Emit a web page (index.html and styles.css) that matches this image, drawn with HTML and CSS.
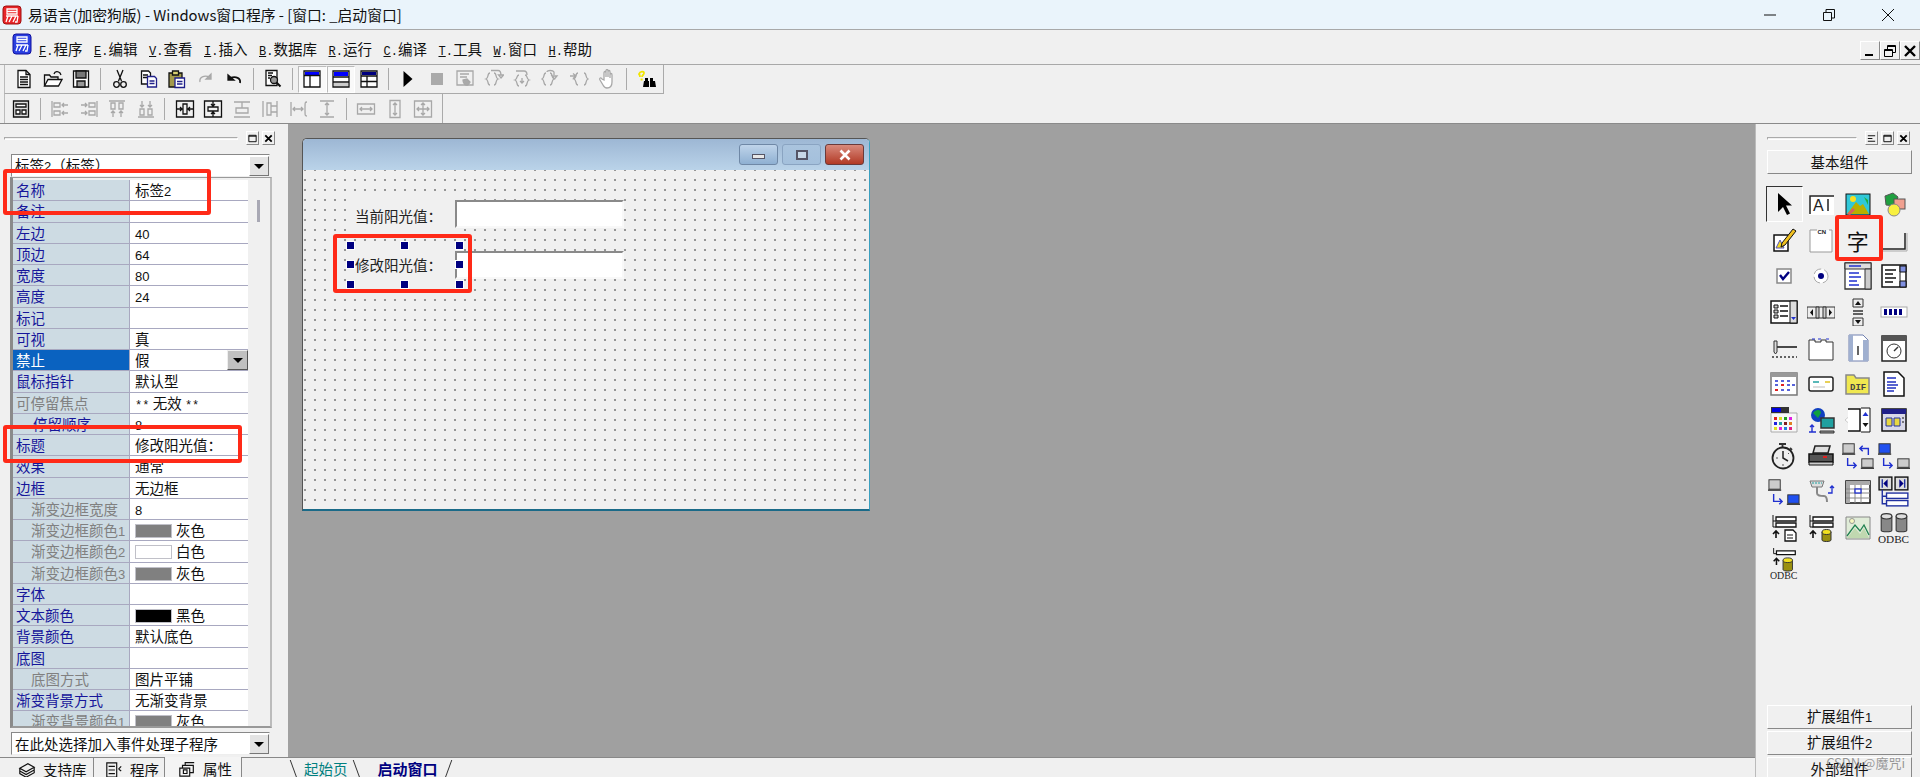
FILE: index.html
```html
<!DOCTYPE html>
<html lang="zh">
<head>
  <meta charset="UTF-8">
  <title>易语言(加密狗版) - Windows窗口程序</title>
  <link rel="stylesheet" href="styles.css">
</head>
<body>
  <!-- 标题栏 -->
  <header class="titlebar">
    <svg class="app-logo" viewBox="0 0 20 20"><rect x="1" y="1" width="18" height="18" rx="3" fill="#e8262a" stroke="#a01010"/><path d="M5 4h10v5H5zM5 6.5h10M4 11h12M6 11l-2 6M10 11l-3 6M14 11l-3 6M16 11l-1 6h-2" fill="none" stroke="#fff" stroke-width="1.3"/></svg>
    <span class="title-text">易语言(加密狗版) - Windows窗口程序 - [窗口: _启动窗口]</span>
    <div class="win-controls">
      <svg viewBox="0 0 14 14"><path d="M1 7h12" stroke="#111" fill="none"/></svg>
      <svg viewBox="0 0 14 14"><path d="M1.5 4.5h8v8h-8zM4 4V1.5h8.5V10H10" stroke="#111" fill="none"/></svg>
      <svg viewBox="0 0 14 14"><path d="M1 1l12 12M13 1L1 13" stroke="#111" fill="none"/></svg>
    </div>
  </header>

  <!-- 菜单 -->
  <nav class="menubar">
    <svg class="menu-logo" viewBox="0 0 20 22"><rect x="1" y="1" width="18" height="20" rx="3" fill="#2a3fe0" stroke="#1010a0"/><path d="M5 4h10v5H5zM5 6.5h10M4 12h12M6 12l-2 6M10 12l-3 6M14 12l-3 6M16 12l-1 6h-2" fill="none" stroke="#fff" stroke-width="1.3"/></svg>
    <a class="menu-item"><span class="m"><u>F</u>.</span>程序</a>
    <a class="menu-item"><span class="m"><u>E</u>.</span>编辑</a>
    <a class="menu-item"><span class="m"><u>V</u>.</span>查看</a>
    <a class="menu-item"><span class="m"><u>I</u>.</span>插入</a>
    <a class="menu-item"><span class="m"><u>B</u>.</span>数据库</a>
    <a class="menu-item"><span class="m"><u>R</u>.</span>运行</a>
    <a class="menu-item"><span class="m"><u>C</u>.</span>编译</a>
    <a class="menu-item"><span class="m"><u>T</u>.</span>工具</a>
    <a class="menu-item"><span class="m"><u>W</u>.</span>窗口</a>
    <a class="menu-item"><span class="m"><u>H</u>.</span>帮助</a>
    <div class="mdi-controls">
      <button class="mdi-btn"><svg viewBox="0 0 14 14"><path d="M2 11h8" stroke="#000" stroke-width="2"/></svg></button>
      <button class="mdi-btn"><svg viewBox="0 0 14 14"><path d="M1.5 5.5h8v7h-8zM1.5 6.5h8M4.5 5V1.5h8v7H10M4.5 2.5h8" stroke="#000" fill="none"/></svg></button>
      <button class="mdi-btn"><svg viewBox="0 0 14 14"><path d="M2 2l10 10M12 2L2 12" stroke="#000" stroke-width="2.4"/></svg></button>
    </div>
  </nav>

  <!-- 工具条 1 -->
  <div class="toolbar first">
    <span class="tool"><svg class="ic" viewBox="0 0 20 20"><path d="M4 1.5h8l4 4v13H4z" fill="#fff"/><path d="M12 1.5v4h4M6 8h8M6 10.5h8M6 13h8M6 15.5h8"/></svg></span>
    <span class="tool"><svg class="ic" viewBox="0 0 20 20"><path d="M1.5 17V6h5l1.5 2h7v2.5"/><path d="M1.5 17l3.5-6.5h14L15.5 17z" fill="#fff"/><path d="M11 5c1-3 4-3 6-1l1 2"/></svg></span>
    <span class="tool"><svg class="ic" viewBox="0 0 20 20"><path d="M2.5 2h15v16h-15z" fill="#fff"/><path d="M5 2h10v7H5z" fill="#777"/><path d="M6 12h8v6H6z" fill="#999"/></svg></span>
    <i class="tool-sep"></i>
    <span class="tool"><svg class="ic" viewBox="0 0 20 20"><path d="M7 1l4.5 11M13 1L8.5 12"/><circle cx="6.5" cy="15.5" r="2.8"/><circle cx="13.5" cy="15.5" r="2.8"/></svg></span>
    <span class="tool"><svg class="ic" viewBox="0 0 20 20"><path d="M2.5 2h7l2 2v11h-9z" fill="#fff"/><path d="M4 6h5M4 8.5h5"/><path d="M8.5 7.5h7l2 2v8.5h-9z" fill="#fff" stroke="#20208a"/><path d="M10.5 12h5M10.5 14.5h5" stroke="#20208a"/></svg></span>
    <span class="tool"><svg class="ic" viewBox="0 0 20 20"><path d="M2 4h13v14H2z" fill="#a39a4c"/><path d="M5.5 2h6v4h-6z" fill="#d8d070"/><path d="M8 9h9.5v9.5H8z" fill="#fff" stroke="#20208a"/><path d="M10 12.5h5.5M10 15h5.5" stroke="#20208a"/></svg></span>
    <span class="tool"><svg class="ic off" viewBox="0 0 20 20"><path d="M4 13c-1-5 4-7 10-5"/><path d="M15 5v5h-5z" fill="#aaa"/></svg></span>
    <span class="tool"><svg class="ic" viewBox="0 0 20 20"><path d="M16 14c1-5-4-7-10-5" stroke-width="1.8"/><path d="M4 6v5h6z" fill="#111"/></svg></span>
    <i class="tool-sep"></i>
    <span class="tool"><svg class="ic" viewBox="0 0 20 20"><path d="M3 1.5h11v15H3z" fill="#fff"/><path d="M5 4h5M5 6.5h4M5 9h2"/><circle cx="11" cy="11" r="3.5" fill="#999"/><path d="M13.5 13.5l4 4" stroke-width="2"/></svg></span>
    <i class="tool-sep"></i>
    <span class="tool on"><svg class="ic" viewBox="0 0 20 20"><path d="M2 2h16v16H2z" fill="#fff"/><path d="M3 3h14v3H3z" fill="#0000ff" stroke="none"/><path d="M2 6.5h16M8 6.5V18"/></svg></span>
    <span class="tool on"><svg class="ic" viewBox="0 0 20 20"><path d="M2 2h16v16H2z" fill="#fff"/><path d="M3 3h14v4H3z" fill="#0000ff" stroke="none"/><path d="M2 8h16M2 13h16"/><path d="M3 14h14v3H3z" fill="#ccc" stroke="none"/></svg></span>
    <span class="tool"><svg class="ic" viewBox="0 0 20 20"><path d="M2 2h16v16H2z" fill="#fff"/><path d="M3 3h14v3H3z" fill="#000080" stroke="none"/><path d="M2 7h16M2 12.5h16M8 7v11"/></svg></span>
    <i class="tool-sep"></i>
    <span class="tool"><svg viewBox="0 0 20 20"><path d="M5.5 2l9 8-9 8z" fill="#000"/></svg></span>
    <span class="tool"><svg viewBox="0 0 20 20"><rect x="4" y="4" width="12" height="12" fill="#aaa"/></svg></span>
    <span class="tool"><svg class="ic off" viewBox="0 0 20 20"><path d="M2 2h16v14H2zM5 5h9M5 8h7"/><path d="M8 11c0 3 2 6 5 5l2-3-3-3z" fill="#aaa"/></svg></span>
    <span class="tool"><svg class="ic off" viewBox="0 0 20 20"><path d="M6 4C3 4 5 9 2 10c3 1 1 6 4 6M10 4c3 0 1 5 4 6-3 1-1 6-4 6M7 1.5h7c3 0 3 3 3 5M14.5 6h5l-2.5 3z"/></svg></span>
    <span class="tool"><svg class="ic off" viewBox="0 0 20 20"><path d="M7 6C4 6 6 10 3 11c3 1 1 6 4 6M13 6c3 0 1 4 4 5-3 1-1 6-4 6M4 2h8c2 0 3 1 3 4M10 9v5M8 12l2 2 2-2"/></svg></span>
    <span class="tool"><svg class="ic off" viewBox="0 0 20 20"><path d="M5 4C2 4 4 9 1 10c3 1 1 6 4 6M9 4c3 0 1 5 4 6-3 1-1 6-4 6M6 3c0-2 6-2 7 0v3M11 7h5l-2.5 3z"/></svg></span>
    <span class="tool"><svg class="ic off" viewBox="0 0 20 20"><path d="M9 4C6 4 8 9 5 10c3 1 1 6 4 6M15 4c3 0 1 5 4 6-3 1-1 6-4 6M1 7h6M4 4.5L7 7l-3 2.5"/></svg></span>
    <span class="tool"><svg class="ic off" viewBox="0 0 20 20"><path d="M6 11V4c0-2 2-2 2 0v4-6c0-2 2-2 2 0v6-5c0-2 2-2 2 0v6-3c0-2 2-2 2 0v7c0 4-2 6-5 6-2 0-3-1-4-3L2 11c-1-2 1-3 2-1z" fill="#fff"/></svg></span>
    <i class="tool-sep"></i>
    <span class="tool"><svg viewBox="0 0 20 20"><path d="M3 8c0-1 0-2-1-3 1-3 5-3 5-1 0 2-2 2-2 4" fill="none" stroke="#f2e500" stroke-width="1.8"/><rect x="3.6" y="9.5" width="2" height="2" fill="#f2e500"/><path d="M8 9h3v3H8zM13 9h3v3h-3zM7 12h5v6H6zM13 12h5l1 6h-6z" fill="#000"/></svg></span>
  </div>

  <!-- 工具条 2 -->
  <div class="toolbar second">
    <span class="tool"><svg class="ic" viewBox="0 0 20 20"><path d="M2.5 2h15v16h-15z" fill="#ddd"/><path d="M5 5h10v3H5zM5 11h4v4H5zM11 11h4v4h-4z" fill="#fff"/></svg></span>
    <i class="tool-sep"></i>
    <span class="tool"><svg class="ic off" viewBox="0 0 20 20"><path d="M2 2v16M4 4h6v4H4zM4 12h6v4H4zM12 6h6M14 4l-2 2 2 2M12 14h6M14 12l-2 2 2 2"/></svg></span>
    <span class="tool"><svg class="ic off" viewBox="0 0 20 20"><path d="M18 2v16M10 4h6v4h-6zM10 12h6v4h-6zM2 6h6M6 4l2 2-2 2M2 14h6M6 12l2 2-2 2"/></svg></span>
    <span class="tool"><svg class="ic off" viewBox="0 0 20 20"><path d="M2 2h16M4 4h4v6H4zM12 4h4v6h-4zM6 12v6M4 14l2-2 2 2M14 12v6M12 14l2-2 2 2"/></svg></span>
    <span class="tool"><svg class="ic off" viewBox="0 0 20 20"><path d="M2 18h16M4 10h4v6H4zM12 10h4v6h-4zM6 2v6M4 6l2 2 2-2M14 2v6M12 6l2 2 2-2"/></svg></span>
    <i class="tool-sep"></i>
    <span class="tool"><svg class="ic" viewBox="0 0 20 20"><path d="M1.5 2h17v16h-17zM8 5h4v10H8zM2 10h5M5 8l2 2-2 2M18 10h-5M15 8l-2 2 2 2"/></svg></span>
    <span class="tool"><svg class="ic" viewBox="0 0 20 20"><path d="M1.5 2h17v16h-17zM5 8h10v4H5zM10 2v5M8 5l2 2 2-2M10 18v-5M8 15l2-2 2 2"/></svg></span>
    <span class="tool"><svg class="ic off" viewBox="0 0 20 20"><path d="M2 3h16M2 18h16M4 9h12v5H4zM10 3v6"/></svg></span>
    <span class="tool"><svg class="ic off" viewBox="0 0 20 20"><path d="M3 2v16M17 2v16M7 4h4v12H7zM11 7h6M11 13h6"/></svg></span>
    <span class="tool"><svg class="ic off" viewBox="0 0 20 20"><path d="M2 3v14M18 3c-2 0-2 0-2 7s0 7 2 7M4 10h10M6 8l-2 2 2 2M12 8l2 2-2 2"/></svg></span>
    <span class="tool"><svg class="ic off" viewBox="0 0 20 20"><path d="M3 2h14M3 18h14M10 4v12M8 6l2-2 2 2M8 14l2 2 2-2"/></svg></span>
    <i class="tool-sep"></i>
    <span class="tool"><svg class="ic off" viewBox="0 0 20 20"><path d="M1.5 5h17v10h-17zM4 10h12M6 8l-2 2 2 2M14 8l2 2-2 2"/></svg></span>
    <span class="tool"><svg class="ic off" viewBox="0 0 20 20"><path d="M5 1.5h10v17H5zM10 4v12M8 6l2-2 2 2M8 14l2 2 2-2"/></svg></span>
    <span class="tool"><svg class="ic off" viewBox="0 0 20 20"><path d="M1.5 2h17v16h-17zM4 10h12M6 8l-2 2 2 2M14 8l2 2-2 2M10 4v12M8 6l2-2 2 2M8 14l2 2 2-2"/></svg></span>
  </div>

  <main class="workspace">
    <!-- 属性面板 -->
    <aside class="left-panel">
      <div class="panel-head">
        <span class="panel-grip"></span>
        <button class="mini-btn"><svg viewBox="0 0 12 12"><path d="M2 2.5h8v7H2zM2 3.5h8" stroke="#000" fill="none"/></svg></button>
        <button class="mini-btn"><svg viewBox="0 0 12 12"><path d="M2.5 2.5l7 7M9.5 2.5l-7 7" stroke="#000" stroke-width="2"/></svg></button>
      </div>
      <div class="combo top-combo"><span class="combo-text">标签<span class="n">2</span>（标签）</span><span class="combo-arrow"></span></div>

      <div class="prop-grid">
        <div class="prop-rows">
          <div class="row"><span class="key">名称</span><span class="val">标签<span class="n">2</span></span></div>
          <div class="row"><span class="key">备注</span><span class="val"></span></div>
          <div class="row"><span class="key">左边</span><span class="val"><span class="n">40</span></span></div>
          <div class="row"><span class="key">顶边</span><span class="val"><span class="n">64</span></span></div>
          <div class="row"><span class="key">宽度</span><span class="val"><span class="n">80</span></span></div>
          <div class="row"><span class="key">高度</span><span class="val"><span class="n">24</span></span></div>
          <div class="row"><span class="key">标记</span><span class="val"></span></div>
          <div class="row"><span class="key">可视</span><span class="val">真</span></div>
          <div class="row"><span class="key selected">禁止</span><span class="val">假<span class="cell-arrow"></span></span></div>
          <div class="row"><span class="key">鼠标指针</span><span class="val">默认型</span></div>
          <div class="row"><span class="key off">可停留焦点</span><span class="val"><span class="m">**</span> 无效 <span class="m">**</span></span></div>
          <div class="row"><span class="key sub-navy">停留顺序</span><span class="val"><span class="n">8</span></span></div>
          <div class="row"><span class="key">标题</span><span class="val">修改阳光值：</span></div>
          <div class="row"><span class="key">效果</span><span class="val">通常</span></div>
          <div class="row"><span class="key">边框</span><span class="val">无边框</span></div>
          <div class="row"><span class="key sub">渐变边框宽度</span><span class="val"><span class="n">8</span></span></div>
          <div class="row"><span class="key sub">渐变边框颜色<span class="n">1</span></span><span class="val"><i class="swatch gray"></i>灰色</span></div>
          <div class="row"><span class="key sub">渐变边框颜色<span class="n">2</span></span><span class="val"><i class="swatch white"></i>白色</span></div>
          <div class="row"><span class="key sub">渐变边框颜色<span class="n">3</span></span><span class="val"><i class="swatch gray"></i>灰色</span></div>
          <div class="row"><span class="key">字体</span><span class="val"></span></div>
          <div class="row"><span class="key">文本颜色</span><span class="val"><i class="swatch black"></i>黑色</span></div>
          <div class="row"><span class="key">背景颜色</span><span class="val">默认底色</span></div>
          <div class="row"><span class="key">底图</span><span class="val"></span></div>
          <div class="row"><span class="key sub">底图方式</span><span class="val">图片平铺</span></div>
          <div class="row"><span class="key">渐变背景方式</span><span class="val">无渐变背景</span></div>
          <div class="row"><span class="key sub">渐变背景颜色<span class="n">1</span></span><span class="val"><i class="swatch gray"></i>灰色</span></div>
        </div>
        <div class="prop-scroll"><i class="prop-thumb"></i></div>
      </div>

      <div class="combo bottom-combo"><span class="combo-text">在此处选择加入事件处理子程序</span><span class="combo-arrow"></span></div>

      <div class="side-tabs">
        <span class="side-tab lib"><svg class="ic" viewBox="0 0 20 20"><path d="M2 8l9-5 7 4-9 5zM2 8v3l7 4 9-5V7M2 11v3l7 4 9-5v-3"/></svg>支持库</span>
        <span class="side-tab prog"><svg class="ic" viewBox="0 0 20 20"><path d="M2 2h11v16H2zM4 6h7M4 10h7M4 14h7M15 9l3-3M15 9l3 2"/></svg>程序</span>
        <span class="side-tab active prop"><svg class="ic" viewBox="0 0 20 20"><path d="M2 9h11v9H2zM5 9V6h12v8h-4M8 6V3h10"/><path d="M6 11h4v4H6z"/></svg>属性</span>
      </div>

      <i class="redbox name-box"></i>
      <i class="redbox caption-box"></i>
    </aside>

    <!-- 设计区 -->
    <section class="center">
      <div class="stage">
        <div class="form-window">
          <div class="form-title">
            <span class="form-btn"><i class="glyph-min"></i></span>
            <span class="form-btn max"><i class="glyph-max"></i></span>
            <span class="form-btn close"><svg viewBox="0 0 14 14"><path d="M2.5 2.5l9 9M11.5 2.5l-9 9" stroke="#fff" stroke-width="2.6"/></svg></span>
          </div>
          <div class="form-client">
            <span class="ctl-label current">当前阳光值：</span>
            <span class="ctl-input current"></span>
            <span class="ctl-label edit">修改阳光值：</span>
            <span class="ctl-input edit"></span>
            <i class="handle h-tl"></i><i class="handle h-tc"></i><i class="handle h-tr"></i>
            <i class="handle h-ml"></i><i class="handle h-mr"></i>
            <i class="handle h-bl"></i><i class="handle h-bc"></i><i class="handle h-br"></i>
            <i class="redbox label-box"></i>
          </div>
        </div>
      </div>
      <div class="doc-tabs">
        <i class="slash back"></i><span class="doc-tab start">起始页</span>
        <i class="slash back second-slash"></i><span class="doc-tab current">启动窗口</span>
        <i class="slash fwd"></i>
      </div>
    </section>

    <!-- 组件箱 -->
    <aside class="right-panel">
      <div class="panel-head">
        <span class="panel-grip"></span>
        <button class="mini-btn"><svg viewBox="0 0 12 12"><path d="M2 3h8M2 6h5M2 9h8" stroke="#000" fill="none"/></svg></button>
        <button class="mini-btn"><svg viewBox="0 0 12 12"><path d="M2 2.5h8v7H2zM2 3.5h8" stroke="#000" fill="none"/></svg></button>
        <button class="mini-btn"><svg viewBox="0 0 12 12"><path d="M2.5 2.5l7 7M9.5 2.5l-7 7" stroke="#000" stroke-width="2"/></svg></button>
      </div>
      <button class="group-btn first-group">基本组件</button>

      <div class="palette">
        <span class="comp picked"><svg viewBox="0 0 28 28"><path d="M8 3v19l5-5 4 8 3-1.500-4-8h6z" fill="#000"/></svg></span>
        <span class="comp"><svg viewBox="0 0 28 28"><rect x="2" y="5" width="25" height="20" fill="#fff"/><path d="M3 24V6h24" fill="none" stroke="#222" stroke-width="1.5"/><path d="M21 9v12" stroke="#222" stroke-width="1.5"/><text x="6" y="21" class="svg-a">A</text></svg></span>
        <span class="comp"><svg viewBox="0 0 28 28"><rect x="2" y="4" width="24" height="21" fill="#30c8d8" stroke="#111"/><path d="M3 24l9-12 4 4 3-2 6 10z" fill="#b8b000"/><circle cx="9" cy="9" r="3" fill="#f8e020"/><path d="M20 7l4 3v5z" fill="#20b040"/><path d="M3 24l6-6 2 2-5 5z" fill="#d86060"/></svg></span>
        <span class="comp"><svg viewBox="0 0 28 28"><path d="M5 6l8-3 5 4-3 9-9-1z" fill="#20a040" stroke="#555"/><rect x="14" y="9" width="11" height="10" fill="#f0a090" stroke="#555"/><circle cx="14" cy="20" r="6" fill="#f8f040" stroke="#888"/></svg></span>

        <span class="comp"><svg viewBox="0 0 28 28"><path d="M4 9h14v16H4z" fill="#fff" stroke="#111" stroke-width="1.5"/><path d="M6 22l4-8 4 8z" fill="#f0d820" stroke="#5050c0"/><path d="M12 17L23 3l3 2-11 14-4 2z" fill="#f0c020" stroke="#111"/></svg></span>
        <span class="comp"><svg viewBox="0 0 28 28"><path d="M10 4H3v22h22V4h-3" fill="#fff" stroke="#999"/><text x="10.5" y="8" class="svg-cn">CN</text></svg></span>
        <span class="comp"><span class="big-zi">字</span></span>
        <span class="comp"><svg viewBox="0 0 28 28"><path d="M2 23h23V7" fill="none" stroke="#222" stroke-width="1.5"/><path d="M2 25h25V7" fill="none" stroke="#aaa"/></svg></span>

        <span class="comp"><svg viewBox="0 0 28 28"><rect x="7" y="7" width="14" height="14" fill="#fff" stroke="#888" stroke-width="1.5"/><path d="M10 13l3 4 6-7" fill="none" stroke="#000080" stroke-width="2.4"/></svg></span>
        <span class="comp"><svg viewBox="0 0 28 28"><circle cx="14" cy="14" r="7" fill="#fff" stroke="#aaa" stroke-dasharray="9 3"/><circle cx="14" cy="14" r="3" fill="#000080"/></svg></span>
        <span class="comp"><svg viewBox="0 0 28 28"><path d="M1 1h26v26H1z" fill="#fff" stroke="#333" stroke-width="1.3"/><path d="M1 1h26v6H1z" fill="#ddd" stroke="#333"/><path d="M5 4h12M5 11h10M5 15h12M5 19h8M5 23h10" stroke="#2030d0" stroke-width="1.3"/><path d="M21 7h6v20h-6z" fill="#ccc" stroke="#333"/></svg></span>
        <span class="comp"><svg viewBox="0 0 28 28"><path d="M2 3h24v22H2z" fill="#fff" stroke="#111" stroke-width="1.5"/><path d="M5 8h11M5 12h8M5 16h11M5 20h8" stroke="#111" stroke-width="1.3"/><path d="M20 3v22" stroke="#111"/><path d="M20 4h6v6h-6zM20 19h6v6h-6z" fill="#8090e0" stroke="#111"/></svg></span>

        <span class="comp"><svg viewBox="0 0 28 28"><path d="M1 3h26v22H1z" fill="#fff" stroke="#111" stroke-width="1.5"/><path d="M4 7h4v3H4zM4 12h4v3H4zM4 17h4v3H4z" fill="#ccc" stroke="#111"/><path d="M10 8h8M10 13h8M10 18h8" stroke="#111" stroke-width="1.3"/><path d="M20 3h7v22h-7z" fill="#ddd" stroke="#111"/><path d="M21 19l2.5 3 2.5-3z" fill="#2030d0"/></svg></span>
        <span class="comp"><svg viewBox="0 0 28 28"><path d="M0 9h28v11H0z" fill="#eee" stroke="#333"/><path d="M6 11l-3 3.5 3 3.5zM22 11l3 3.5-3 3.5z" fill="#111"/><path d="M9 9h3v11H9zM16 9h3v11h-3z" fill="#ccc" stroke="#333"/></svg></span>
        <span class="comp"><svg viewBox="0 0 28 28"><path d="M9 0h10v28H9z" fill="#eee"/><path d="M9 1h10v8H9zM9 20h10v8H9z" fill="#eee" stroke="#333"/><path d="M14 3l-3 4h6zM14 26l-3-4h6z" fill="#111"/><path d="M9 13h10M9 16h10" stroke="#333" stroke-width="1.5"/></svg></span>
        <span class="comp"><svg viewBox="0 0 28 28"><rect x="1" y="9" width="26" height="10" fill="#fff" stroke="#aaa"/><path d="M4 11h3v6H4zM9 11h3v6H9zM14 11h3v6h-3zM19 11h3v6h-3z" fill="#000080"/></svg></span>

        <span class="comp"><svg viewBox="0 0 28 28"><path d="M4 13h23" stroke="#111" stroke-width="1.5"/><path d="M4 7h3v11l-1.5 2L4 18z" fill="#ddd" stroke="#333"/><path d="M2 23h25" stroke="#333" stroke-dasharray="2 2" stroke-width="1.5"/></svg></span>
        <span class="comp"><svg viewBox="0 0 28 28"><path d="M2 8h24v18H2z" fill="#fff"/><path d="M2 6h6v2h6V6h5v2h7v18H2z" fill="#fff" stroke="#333"/><path d="M5 5h3M11 5h3M19 5h3" stroke="#2030d0"/></svg></span>
        <span class="comp"><svg viewBox="0 0 28 28"><path d="M5 1h14l5 5v21H5z" fill="#fff" stroke="#7080b0"/><path d="M5 1h4v26H5zM19 6h5v21h-5z" fill="#a0b0d0"/><path d="M14 12v9" stroke="#333" stroke-width="1.5"/></svg></span>
        <span class="comp"><svg viewBox="0 0 28 28"><path d="M2 2h24v25H2z" fill="#fff" stroke="#222" stroke-width="1.5"/><path d="M2 2h24v5H2z" fill="#555"/><circle cx="14" cy="17" r="7" fill="#fff" stroke="#333"/><path d="M14 17l4-4" stroke="#333" stroke-width="1.5"/></svg></span>

        <span class="comp"><svg viewBox="0 0 28 28"><path d="M1 3h26v22H1z" fill="#fff" stroke="#777" stroke-width="1.5"/><path d="M1 3h26v4H1z" fill="#999"/><path d="M5 11h3M11 11h3M17 11h3M5 15h3M17 15h3M22 15h3M11 20h3M17 20h3" stroke="#2030d0" stroke-width="1.5"/><path d="M11 15h3M5 20h3" stroke="#e02020" stroke-width="2"/></svg></span>
        <span class="comp"><svg viewBox="0 0 28 28"><rect x="2" y="7" width="24" height="14" rx="2" fill="#fff" stroke="#222" stroke-width="1.5"/><path d="M6 12h6" stroke="#20a0a0" stroke-width="1.5"/><path d="M18 12h5" stroke="#e0c020" stroke-width="1.5"/><path d="M6 17h12" stroke="#bbb"/></svg></span>
        <span class="comp"><svg viewBox="0 0 28 28"><path d="M2 24V5h8l2 3h13v16z" fill="#f0e850" stroke="#888" stroke-width="1.5"/><text x="6" y="20" class="svg-dir">DIF</text></svg></span>
        <span class="comp"><svg viewBox="0 0 28 28"><path d="M4 2h14l6 6v18H4z" fill="#fff" stroke="#111" stroke-width="1.5"/><path d="M7 8h9M7 12h9M7 15h11M7 18h9M7 21h7" stroke="#2030c0" stroke-width="1.3"/></svg></span>

        <span class="comp"><svg viewBox="0 0 28 28"><path d="M1 7h26v19H1z" fill="#f8f8f8" stroke="#aaa"/><path d="M1 1h18v6H1z" fill="#333"/><path d="M2 2h9v4H2z" fill="#0000e0"/><path d="M4 11h3v3H4z" fill="#e02020"/><path d="M9 11h3v3H9z" fill="#e0e020"/><path d="M14 11h3v3h-3z" fill="#20a020"/><path d="M19 11h3v3h-3z" fill="#e020e0"/><path d="M4 16h3v3H4z" fill="#2020e0"/><path d="M9 16h3v3H9z" fill="#20a0a0"/><path d="M14 16h3v3h-3z" fill="#802020"/><path d="M19 16h3v3h-3z" fill="#e08020"/><path d="M4 21h3v3H4z" fill="#e0e020"/><path d="M9 21h3v3H9z" fill="#e020e0"/><path d="M14 21h3v3h-3z" fill="#2080e0"/><path d="M19 21h3v3h-3z" fill="#e02080"/></svg></span>
        <span class="comp"><svg viewBox="0 0 28 28"><circle cx="11" cy="9" r="7" fill="#1040c0"/><path d="M6 7c3-4 8-4 8 0l-3 5z" fill="#10a040"/><rect x="14" y="12" width="13" height="10" fill="#20a0a0" stroke="#333" stroke-width="1.5"/><path d="M13 25h14v2H13z" fill="#999" stroke="#333"/><path d="M2 26h7M5 26V19M3 21l2-2 2 2" fill="none" stroke="#2030d0" stroke-width="1.4"/></svg></span>
        <span class="comp"><svg viewBox="0 0 28 28"><path d="M1 14l7-6v12z" fill="#fff" stroke="#ccc"/><path d="M4 3h12v22H4" fill="#fff" stroke="#111" stroke-width="1.5"/><path d="M17 2h9v24h-9" fill="#fff" stroke="#111"/><path d="M21.5 6l-3 4h6z" fill="#2030d0"/><path d="M21.5 21l-3-4h6z" fill="#111"/></svg></span>
        <span class="comp"><svg viewBox="0 0 28 28"><path d="M2 3h24v22H2z" fill="#d8d8e8" stroke="#111" stroke-width="1.5"/><path d="M2 3h24v5H2z" fill="#202088"/><path d="M6 12h6v8H6zM14 12h6v8h-6z" fill="#e8d840" stroke="#2030a0"/><path d="M22 12h2M22 16h2" stroke="#111"/></svg></span>

        <span class="comp"><svg viewBox="0 0 28 28"><path d="M9 2h7M12.5 2v4M20 6l2 2" stroke="#333" stroke-width="1.8"/><circle cx="13" cy="16" r="10.5" fill="#eee" stroke="#222" stroke-width="1.8"/><path d="M13 9v7l5 3" fill="none" stroke="#222" stroke-width="1.5"/><path d="M6 16h2M13 22v2M18 12l1-1" stroke="#555"/></svg></span>
        <span class="comp"><svg viewBox="0 0 28 28"><path d="M8 4h15l-2 7H6z" fill="#ddd" stroke="#222" stroke-width="1.5"/><path d="M2 12h24v8H2z" fill="#555" stroke="#111" stroke-width="1.5"/><path d="M2 20h24v3H2z" fill="#ccc" stroke="#111"/><path d="M16 15h4" stroke="#e02020" stroke-width="2"/></svg></span>
        <span class="comp wide"><svg viewBox="0 0 34 28"><rect x="1" y="1" width="12" height="10" fill="#ccc" stroke="#333"/><path d="M0 12h14" stroke="#333" stroke-width="1.5"/><rect x="21" y="17" width="12" height="9" fill="#ccc" stroke="#333"/><path d="M20 27h14" stroke="#333" stroke-width="1.5"/><path d="M28 13V6h-9M22 3l-3 3 3 3M6 16v8h9M12 21l3 3-3 3" fill="none" stroke="#2030d0" stroke-width="1.5"/></svg></span>
        <span class="comp wide"><svg viewBox="0 0 34 28"><rect x="1" y="1" width="12" height="10" fill="#2050f0" stroke="#333"/><path d="M0 12h14" stroke="#333" stroke-width="1.5"/><rect x="21" y="17" width="12" height="9" fill="#ccc" stroke="#333"/><path d="M20 27h14" stroke="#333" stroke-width="1.5"/><path d="M6 16v8h9M12 21l3 3-3 3" fill="none" stroke="#2030d0" stroke-width="1.5"/></svg></span>

        <span class="comp wide"><svg viewBox="0 0 34 28"><rect x="1" y="1" width="12" height="10" fill="#ccc" stroke="#333"/><path d="M0 12h14" stroke="#333" stroke-width="1.5"/><rect x="21" y="17" width="12" height="9" fill="#2050f0" stroke="#333"/><path d="M20 27h14" stroke="#333" stroke-width="1.5"/><path d="M6 16v8h9M12 21l3 3-3 3" fill="none" stroke="#2030d0" stroke-width="1.5"/></svg></span>
        <span class="comp"><svg viewBox="0 0 28 28"><path d="M3 3h14l-2 6H5z" fill="#ddd" stroke="#777"/><path d="M5 5h10" stroke="#20a0a0" stroke-dasharray="2 1"/><path d="M10 9v6c0 3 3 3 7 3 3 0 3 4 3 6" fill="none" stroke="#888" stroke-width="2"/><path d="M21 15h4V8M23 10l2-2 2 2" fill="none" stroke="#2030d0" stroke-width="1.3"/></svg></span>
        <span class="comp"><svg viewBox="0 0 28 28"><path d="M2 3h24v22H2z" fill="#fff" stroke="#111" stroke-width="1.5"/><path d="M2 3h24v4H2zM2 3h4v22H2z" fill="#aaa"/><path d="M2 11h24M2 15h24M2 20h24M11 7v18M17 7v18" stroke="#888"/><rect x="11" y="11" width="6" height="4" fill="#fff" stroke="#2030d0" stroke-width="1.3"/></svg></span>
        <span class="comp wide"><svg viewBox="0 0 30 30"><rect x="1" y="1" width="12" height="12" fill="#ddd" stroke="#111" stroke-width="1.3"/><rect x="16" y="1" width="12" height="12" fill="#ddd" stroke="#111" stroke-width="1.3"/><path d="M9 3L5 7l4 4zM20 3l4 4-4 4z" fill="#000080"/><path d="M4 3v8M25 3v8M4 13v13h4M4 19h4" fill="none" stroke="#2030a0" stroke-width="1.3"/><rect x="8" y="16" width="20" height="5" fill="#fff" stroke="#2030a0" stroke-width="1.3"/><rect x="8" y="23" width="20" height="5" fill="#fff" stroke="#2030a0" stroke-width="1.3"/></svg></span>

        <span class="comp"><svg viewBox="0 0 28 28"><path d="M3 1v12h3M3 7h3" fill="none" stroke="#111"/><path d="M6 3h20v4H6zM6 9h20v4H6z" fill="#fff" stroke="#111" stroke-width="1.3"/><path d="M6 24v-7M3 20l3-3 3 3" fill="none" stroke="#111" stroke-width="1.6"/><path d="M15 16h8l3 3v8H15z" fill="#fff" stroke="#111" stroke-width="1.3"/><path d="M17 21h6M17 24h6" stroke="#111"/></svg></span>
        <span class="comp"><svg viewBox="0 0 28 28"><path d="M3 1v12h3M3 7h3" fill="none" stroke="#111"/><path d="M6 3h20v4H6zM6 9h20v4H6z" fill="#fff" stroke="#111" stroke-width="1.3"/><path d="M6 24v-7M3 20l3-3 3 3" fill="none" stroke="#111" stroke-width="1.6"/><path d="M15 18v8c0 2 9 2 9 0v-8z" fill="#9a9010" stroke="#333"/><ellipse cx="19.5" cy="18" rx="4.5" ry="2.5" fill="#f0e020" stroke="#333"/></svg></span>
        <span class="comp"><svg viewBox="0 0 28 28"><path d="M2 3h24v22H2z" fill="#e0ecd8" stroke="#888"/><path d="M3 22l8-11 5 6 4-6 5 10" fill="none" stroke="#208050" stroke-width="1.3"/><path d="M3 24l8-10 5 6 4-6 5 10z" fill="#c0d8b0"/><circle cx="8" cy="7" r="2.5" fill="#f8f8c0" stroke="#999"/></svg></span>
        <span class="comp wide"><svg viewBox="0 0 30 30"><path d="M3 4v13c0 2 10 2 10 0V4z" fill="#888" stroke="#333"/><ellipse cx="8" cy="4" rx="5" ry="2.5" fill="#ddd" stroke="#333"/><path d="M17 4v13c0 2 10 2 10 0V4z" fill="#888" stroke="#333"/><ellipse cx="22" cy="4" rx="5" ry="2.5" fill="#ddd" stroke="#333"/><text x="0" y="29" class="svg-odbc">ODBC</text></svg></span>

        <span class="comp wide"><svg viewBox="0 0 30 34"><path d="M4 0v6h3" fill="none" stroke="#111"/><path d="M7 3h20v4H7z" fill="#fff" stroke="#111" stroke-width="1.3"/><path d="M7 18v-7M4 14l3-3 3 3" fill="none" stroke="#111" stroke-width="1.6"/><path d="M14 13v10c0 2 10 2 10 0V13z" fill="#9a9010" stroke="#333"/><ellipse cx="19" cy="13" rx="5" ry="2.5" fill="#f0e020" stroke="#333"/><text x="0" y="33" class="svg-odbc">ODBC</text></svg></span>
      </div>

      <div class="group-stack">
        <button class="group-btn">扩展组件<span class="n">1</span></button>
        <button class="group-btn">扩展组件<span class="n">2</span></button>
        <button class="group-btn last">外部组件</button>
      </div>
      <i class="redbox zi-box"></i>
      <span class="watermark">CSDN @魔咒i</span>
    </aside>
  </main>
</body>
</html>
```

FILE: styles.css
```css
* {
  box-sizing: border-box;
}
html, body {
  height: 100%;
}
body {
  margin: 0;
  display: flex;
  flex-direction: column;
  overflow: hidden;
  font-family: "Noto Sans CJK SC", "Liberation Sans", sans-serif;
  font-size: 14.5px;
  color: #111;
  background-color: #f0f0f0;
}
button {
  font: inherit;
  color: inherit;
  padding: 0;
}
.n {
  font-family: "Liberation Sans", sans-serif;
  font-size: 13px;
}
.m {
  font-family: "Liberation Mono", monospace;
  font-size: 12px;
}

/* 标题栏 */
.titlebar {
  height: 29px;
  display: flex;
  align-items: center;
  padding-left: 2px;
  background-color: #eaf4fb;
  flex: none;
}
.app-logo {
  width: 20px;
  height: 22px;
}
.title-text {
  margin-left: 6px;
  font-size: 14.8px;
  white-space: nowrap;
}
.win-controls {
  margin-left: auto;
  display: flex;
  gap: 45px;
  padding-right: 25px;
}
.win-controls svg {
  width: 14px;
  height: 14px;
}

/* 菜单 */
.menubar {
  height: 36px;
  display: flex;
  align-items: flex-end;
  padding: 0 0 2px 4px;
  border-top: 1px solid #a8a8a8;
  border-bottom: 1px solid #a8a8a8;
  flex: none;
}
.menu-logo {
  width: 20px;
  height: 22px;
  margin: 0 7px 7px 8px;
}
.menu-item {
  margin-right: 11.6px;
  line-height: 20px;
  white-space: nowrap;
}
.mdi-controls {
  margin-left: auto;
  display: flex;
  align-self: flex-end;
  margin-bottom: 2px;
}
.mdi-btn {
  width: 20px;
  height: 19px;
  display: flex;
  align-items: center;
  justify-content: center;
  background: #f0f0f0;
  border: 1px solid;
  border-color: #fff #888 #888 #fff;
}
.mdi-btn svg {
  width: 14px;
  height: 14px;
}

/* 工具条 */
.toolbar {
  height: 29px;
  display: flex;
  align-items: center;
  margin-left: 4px;
  border-left: 1px solid #bbb;
  border-right: 1px solid #aaa;
  border-bottom: 1px solid #aaa;
  flex: none;
}
.toolbar.first {
  width: 660px;
  padding-left: 5px;
}
.toolbar.second {
  width: 439px;
  padding-left: 2px;
  border-bottom: none;
}
.tool {
  width: 28.5px;
  height: 27px;
  display: flex;
  align-items: center;
  justify-content: center;
}
.tool.on {
  background-color: #f9f9f9;
  border: 1px solid;
  border-color: #bbb #fff #fff #bbb;
}
.tool svg {
  width: 20px;
  height: 20px;
}
.tool-sep {
  width: 10.5px;
  height: 24px;
  position: relative;
}
.tool-sep::after {
  content: "";
  position: absolute;
  left: 4px;
  top: 1px;
  bottom: 1px;
  width: 1px;
  background-color: #aaa;
}
.ic {
  fill: none;
  stroke: #111;
  stroke-width: 1.3;
}
.ic.off {
  stroke: #a8a8a8;
}

/* 主区域 */
.workspace {
  flex: 1;
  min-height: 0;
  display: flex;
  border-top: 1px solid #8a8a8a;
}
.left-panel, .right-panel {
  position: relative;
  display: flex;
  flex-direction: column;
  flex: none;
}
.left-panel {
  width: 288px;
  padding: 0 13px 0 4px;
}
.right-panel {
  width: 165px;
  padding: 0 8px 0 11px;
  border-left: 1px solid #bbb;
}
.panel-head {
  height: 28px;
  display: flex;
  align-items: center;
  justify-content: flex-end;
  flex: none;
}
.right-panel .panel-head {
  margin-right: 2px;
}
.panel-grip {
  flex: 1;
  height: 3px;
  margin-right: 5px;
  border: 1px solid;
  border-color: #aaa #fff #fff #aaa;
}
.mini-btn {
  width: 13px;
  height: 14px;
  margin-left: 3px;
  display: flex;
  align-items: center;
  justify-content: center;
  background: #f0f0f0;
  border: 1px solid;
  border-color: #fff #888 #888 #fff;
}
.mini-btn svg {
  width: 11px;
  height: 11px;
}

/* 下拉框 */
.combo {
  height: 23px;
  margin: 0 5px 0 7px;
  display: flex;
  align-items: center;
  background-color: #fff;
  border: 1px solid;
  border-color: #888 #eee #eee #888;
  flex: none;
}
.top-combo {
  margin-top: 2px;
}
.bottom-combo {
  margin-top: 4px;
}
.combo-text {
  flex: 1;
  padding-left: 3px;
  white-space: nowrap;
  line-height: 20px;
}
.combo-arrow {
  width: 20px;
  height: 20px;
  background-color: #e4e4e4;
  border: 1px solid;
  border-color: #fff #777 #777 #fff;
  position: relative;
}
.combo-arrow::after, .cell-arrow::after {
  content: "";
  position: absolute;
  left: 50%;
  top: 50%;
  margin: -2px 0 0 -5px;
  border: 5px solid transparent;
  border-top-color: #000;
  border-bottom: none;
}

/* 属性表 */
.prop-grid {
  height: 551px;
  margin: 0 3px 0 6px;
  display: flex;
  padding-top: 2px;
  overflow: hidden;
  border: 1px solid;
  border-width: 1px 2px 2px 3px;
  border-color: #9a9a9a #bbb #999 #8a8a8a;
  flex: none;
}
.prop-rows {
  width: 235px;
  flex: none;
}
.prop-scroll {
  flex: 1;
  position: relative;
}
.prop-thumb {
  position: absolute;
  left: 9px;
  top: 20px;
  width: 3px;
  height: 22px;
  background-color: #a8a8b4;
}
.row {
  height: 21.25px;
  display: flex;
  line-height: 20px;
  white-space: nowrap;
}
.key, .val {
  display: block;
  border-bottom: 1px solid #a8a8c0;
}
.key {
  width: 117px;
  padding-left: 3px;
  color: #16169a;
  background-color: #cddbe3;
  border-right: 1px solid #a8a8c0;
  overflow: hidden;
}
.key.selected {
  color: #fff;
  background-color: #0a62c0;
}
.key.off {
  color: #808080;
}
.key.sub {
  padding-left: 18px;
  color: #808080;
}
.key.sub-navy {
  padding-left: 20px;
  color: #16169a;
}
.val {
  flex: 1;
  padding-left: 5px;
  position: relative;
  background-color: #fff;
}
.swatch {
  display: inline-block;
  vertical-align: -2px;
  width: 37px;
  height: 14px;
  margin-right: 4px;
  border: 1px solid #c0c0c8;
}
.swatch.gray {
  background-color: #808080;
}
.swatch.white {
  background-color: #fff;
}
.swatch.black {
  background-color: #000;
}
.cell-arrow {
  position: absolute;
  right: 0;
  top: 0;
  bottom: 0;
  width: 21px;
  background-color: #c0c0c0;
  border: 1px solid;
  border-color: #eee #555 #555 #eee;
}

/* 面板标签 */
.side-tabs {
  display: flex;
  margin: 2px -13px 0 -4px;
  padding-left: 5px;
  border-top: 1px solid #888;
  flex: 1;
  min-height: 0;
}
.side-tab {
  display: flex;
  align-items: flex-start;
  padding-top: 2px;
  line-height: 20px;
  white-space: nowrap;
  border-right: 1px solid #888;
}
.side-tab svg {
  width: 20px;
  height: 18px;
  margin: 1px 6px 0 0;
}
.side-tab.lib {
  width: 89px;
  padding-left: 12px;
}
.side-tab.prog {
  width: 71px;
  padding-left: 10px;
}
.side-tab.prop {
  width: 77px;
  padding-left: 12px;
}
.side-tab.active {
  margin-top: -1px;
  background-color: #f4f4f4;
}

/* 设计区 */
.center {
  flex: 1;
  min-width: 0;
  display: flex;
  flex-direction: column;
}
.stage {
  flex: 1;
  min-height: 0;
  padding: 14px 0 0 14px;
  background-color: #a0a0a0;
}
.form-window {
  width: 568px;
  height: 373px;
  display: flex;
  flex-direction: column;
  background-color: #f0f0f0;
  border: 1px solid #555;
  border-right-color: #3aa0c0;
  border-bottom: 2px solid #1a6a88;
  border-radius: 5px 5px 0 0;
}
.form-title {
  height: 31px;
  display: flex;
  justify-content: flex-end;
  gap: 4px;
  padding: 5px 5px 0 0;
  background: linear-gradient(#9db7d4, #bad3e9);
  border-radius: 4px 4px 0 0;
  flex: none;
}
.form-btn {
  width: 39px;
  height: 21px;
  display: flex;
  align-items: center;
  justify-content: center;
  background: linear-gradient(#bfd4ea, #8fb0d2);
  border: 1px solid #6f88a6;
  border-radius: 3px;
}
.form-btn.max {
  background: linear-gradient(#aac4de, #a4c0dc);
  border-color: #8aa4c2;
}
.form-btn.close {
  background: linear-gradient(#d98a7c, #b23a26);
  border-color: #6b3a3a;
}
.form-btn.close svg {
  width: 14px;
  height: 14px;
}
.glyph-min {
  width: 13px;
  height: 5px;
  background-color: #e8e8e8;
  border: 1px solid #556;
  margin-top: 3px;
}
.glyph-max {
  width: 12px;
  height: 10px;
  border: 2px solid #556;
  background: #c8d8e8;
}
.form-client {
  flex: 1;
  position: relative;
  background-color: #f0f0f0;
  background-image: radial-gradient(circle at 1px 1px, #333 0.5px, rgba(51, 51, 51, 0) 0.9px);
  background-size: 10px 10px;
  background-position: 1px -1px;
}
/* 窗口内的组件是自由摆放的 */
.ctl-label {
  position: absolute;
  left: 47px;
  width: 109px;
  height: 39px;
  padding-left: 5px;
  line-height: 39px;
  background-color: #f0f0f0;
  color: #222;
}
.ctl-label.current {
  top: 26px;
}
.ctl-label.edit {
  top: 75px;
}
.ctl-input {
  position: absolute;
  left: 152px;
  width: 169px;
  height: 28px;
  background-color: #fff;
  border: 2px solid;
  border-color: #8a8a8a #f8f8f8 #f8f8f8 #8a8a8a;
}
.ctl-input.current {
  top: 30px;
}
.ctl-input.edit {
  top: 81px;
}
.handle {
  position: absolute;
  width: 7px;
  height: 7px;
  background-color: #000080;
  outline: 1px solid #fff;
}
.h-tl, .h-tc, .h-tr {
  top: 72px;
}
.h-ml, .h-mr {
  top: 91px;
}
.h-bl, .h-bc, .h-br {
  top: 111px;
}
.h-tl, .h-ml, .h-bl {
  left: 44px;
}
.h-tc, .h-bc {
  left: 98px;
}
.h-tr, .h-mr, .h-br {
  left: 153px;
}

/* 文档标签 */
.doc-tabs {
  height: 20px;
  display: flex;
  align-items: center;
  padding: 3px 0 0 2px;
  line-height: 20px;
  border-top: 1px solid #888;
  flex: none;
}
.slash {
  width: 1px;
  height: 18px;
  background-color: #333;
  margin-left: 3px;
}
.slash.back {
  transform: skewX(20deg);
}
.slash.fwd {
  transform: skewX(-20deg);
  margin-left: 10px;
}
.doc-tab.start {
  margin-left: 10px;
  color: #008080;
}
.slash.second-slash {
  margin-left: 8px;
}
.doc-tab.current {
  margin-left: 21px;
  font-size: 15px;
  font-weight: bold;
  color: #000080;
}

/* 组件箱 */
.first-group {
  margin-top: -2px;
}
.group-btn {
  width: 145px;
  height: 24px;
  line-height: 20px;
  background: #f0f0f0;
  border: 1px solid;
  border-color: #fff #888 #888 #fff;
  flex: none;
}
.palette {
  display: grid;
  grid-template-columns: repeat(4, 36.7px);
  grid-auto-rows: 36px;
  margin-top: 12px;
  margin-left: -1px;
}
.comp {
  display: flex;
  align-items: center;
  justify-content: center;
}
.comp svg {
  width: 28px;
  height: 28px;
  flex: none;
}
.comp.wide svg {
  width: 32px;
  height: 32px;
}
.comp.picked {
  border: 1px solid;
  border-color: #333 #fff #fff #333;
}
.big-zi {
  font-size: 22px;
  line-height: 28px;
  color: #111;
}
.svg-a {
  font-family: "Liberation Sans", sans-serif;
  font-size: 16px;
  fill: #222;
}
.svg-cn {
  font-family: "Liberation Sans", sans-serif;
  font-size: 6px;
  font-weight: bold;
  fill: #222;
}
.svg-dir {
  font-family: "Liberation Mono", monospace;
  font-size: 9px;
  font-weight: bold;
  fill: #444;
}
.svg-odbc {
  font-family: "Liberation Serif", serif;
  font-size: 10.5px;
  fill: #222;
}
.group-stack {
  margin-top: auto;
  margin-bottom: -4px;
  display: flex;
  flex-direction: column;
  gap: 2px;
}

/* 红框标注 */
.redbox {
  position: absolute;
  border: 4px solid #ff2a18;
  border-radius: 3px;
  pointer-events: none;
}
.name-box {
  left: 3px;
  top: 45px;
  width: 208px;
  height: 46px;
}
.caption-box {
  left: 3px;
  top: 301px;
  width: 239px;
  height: 38px;
}
.label-box {
  left: 30px;
  top: 64px;
  width: 139px;
  height: 59px;
}
.zi-box {
  left: 79px;
  top: 91px;
  width: 48px;
  height: 46px;
}
.watermark {
  position: absolute;
  right: 15px;
  bottom: 5px;
  font-size: 13px;
  white-space: nowrap;
  color: rgba(90, 90, 90, 0.6);
}
```
